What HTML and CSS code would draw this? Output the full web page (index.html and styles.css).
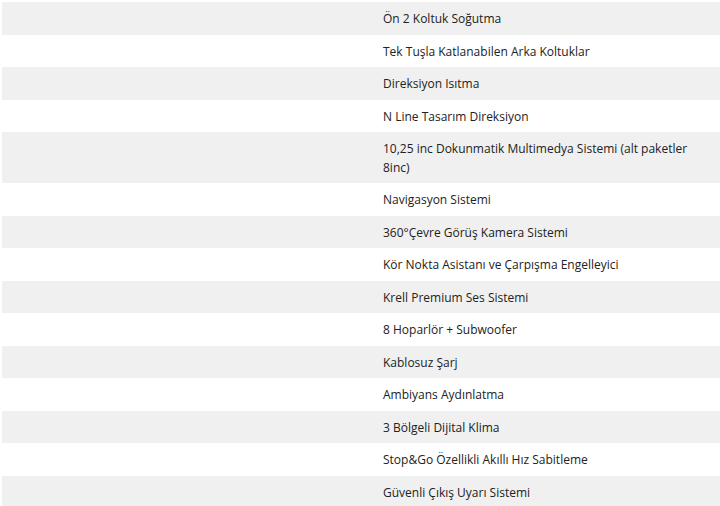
FILE: index.html
```html
<!DOCTYPE html>
<html lang="tr">
<head>
<meta charset="utf-8">
<title>Donanım</title>
<link rel="stylesheet" href="styles.css">
</head>
<body>
<table class="spec">
  <tbody>
    <tr><td class="label"></td><td class="value">Ön 2 Koltuk Soğutma</td></tr>
    <tr><td class="label"></td><td class="value">Tek Tuşla Katlanabilen Arka Koltuklar</td></tr>
    <tr><td class="label"></td><td class="value">Direksiyon Isıtma</td></tr>
    <tr><td class="label"></td><td class="value">N Line Tasarım Direksiyon</td></tr>
    <tr><td class="label"></td><td class="value">10,25 inc Dokunmatik Multimedya Sistemi (alt paketler 8inc)</td></tr>
    <tr><td class="label"></td><td class="value">Navigasyon Sistemi</td></tr>
    <tr><td class="label"></td><td class="value">360°Çevre Görüş Kamera Sistemi</td></tr>
    <tr><td class="label"></td><td class="value">Kör Nokta Asistanı ve Çarpışma Engelleyici</td></tr>
    <tr><td class="label"></td><td class="value">Krell Premium Ses Sistemi</td></tr>
    <tr><td class="label"></td><td class="value">8 Hoparlör + Subwoofer</td></tr>
    <tr><td class="label"></td><td class="value">Kablosuz Şarj</td></tr>
    <tr><td class="label"></td><td class="value">Ambiyans Aydınlatma</td></tr>
    <tr><td class="label"></td><td class="value">3 Bölgeli Dijital Klima</td></tr>
    <tr><td class="label"></td><td class="value">Stop&amp;Go Özellikli Akıllı Hız Sabitleme</td></tr>
    <tr><td class="label"></td><td class="value">Güvenli Çıkış Uyarı Sistemi</td></tr>
  </tbody>
</table>
</body>
</html>
```
FILE: styles.css
```css
html, body {
  margin: 0;
  padding: 0;
  background: #ffffff;
}
body {
  padding: 2px 0 0 2px;
  font-family: "Open Sans", "Noto Sans", sans-serif;
  font-size: 12px;
  color: #222222;
}
.spec {
  width: 718px;
  border-collapse: collapse;
  border-spacing: 0;
}
.spec tr:nth-child(odd) {
  background: #f0f0f0;
}
.spec td {
  padding: 8px 8px 6px;
  line-height: 18.5px;
  vertical-align: top;
}
.spec .label {
  width: 357px;
}
```
